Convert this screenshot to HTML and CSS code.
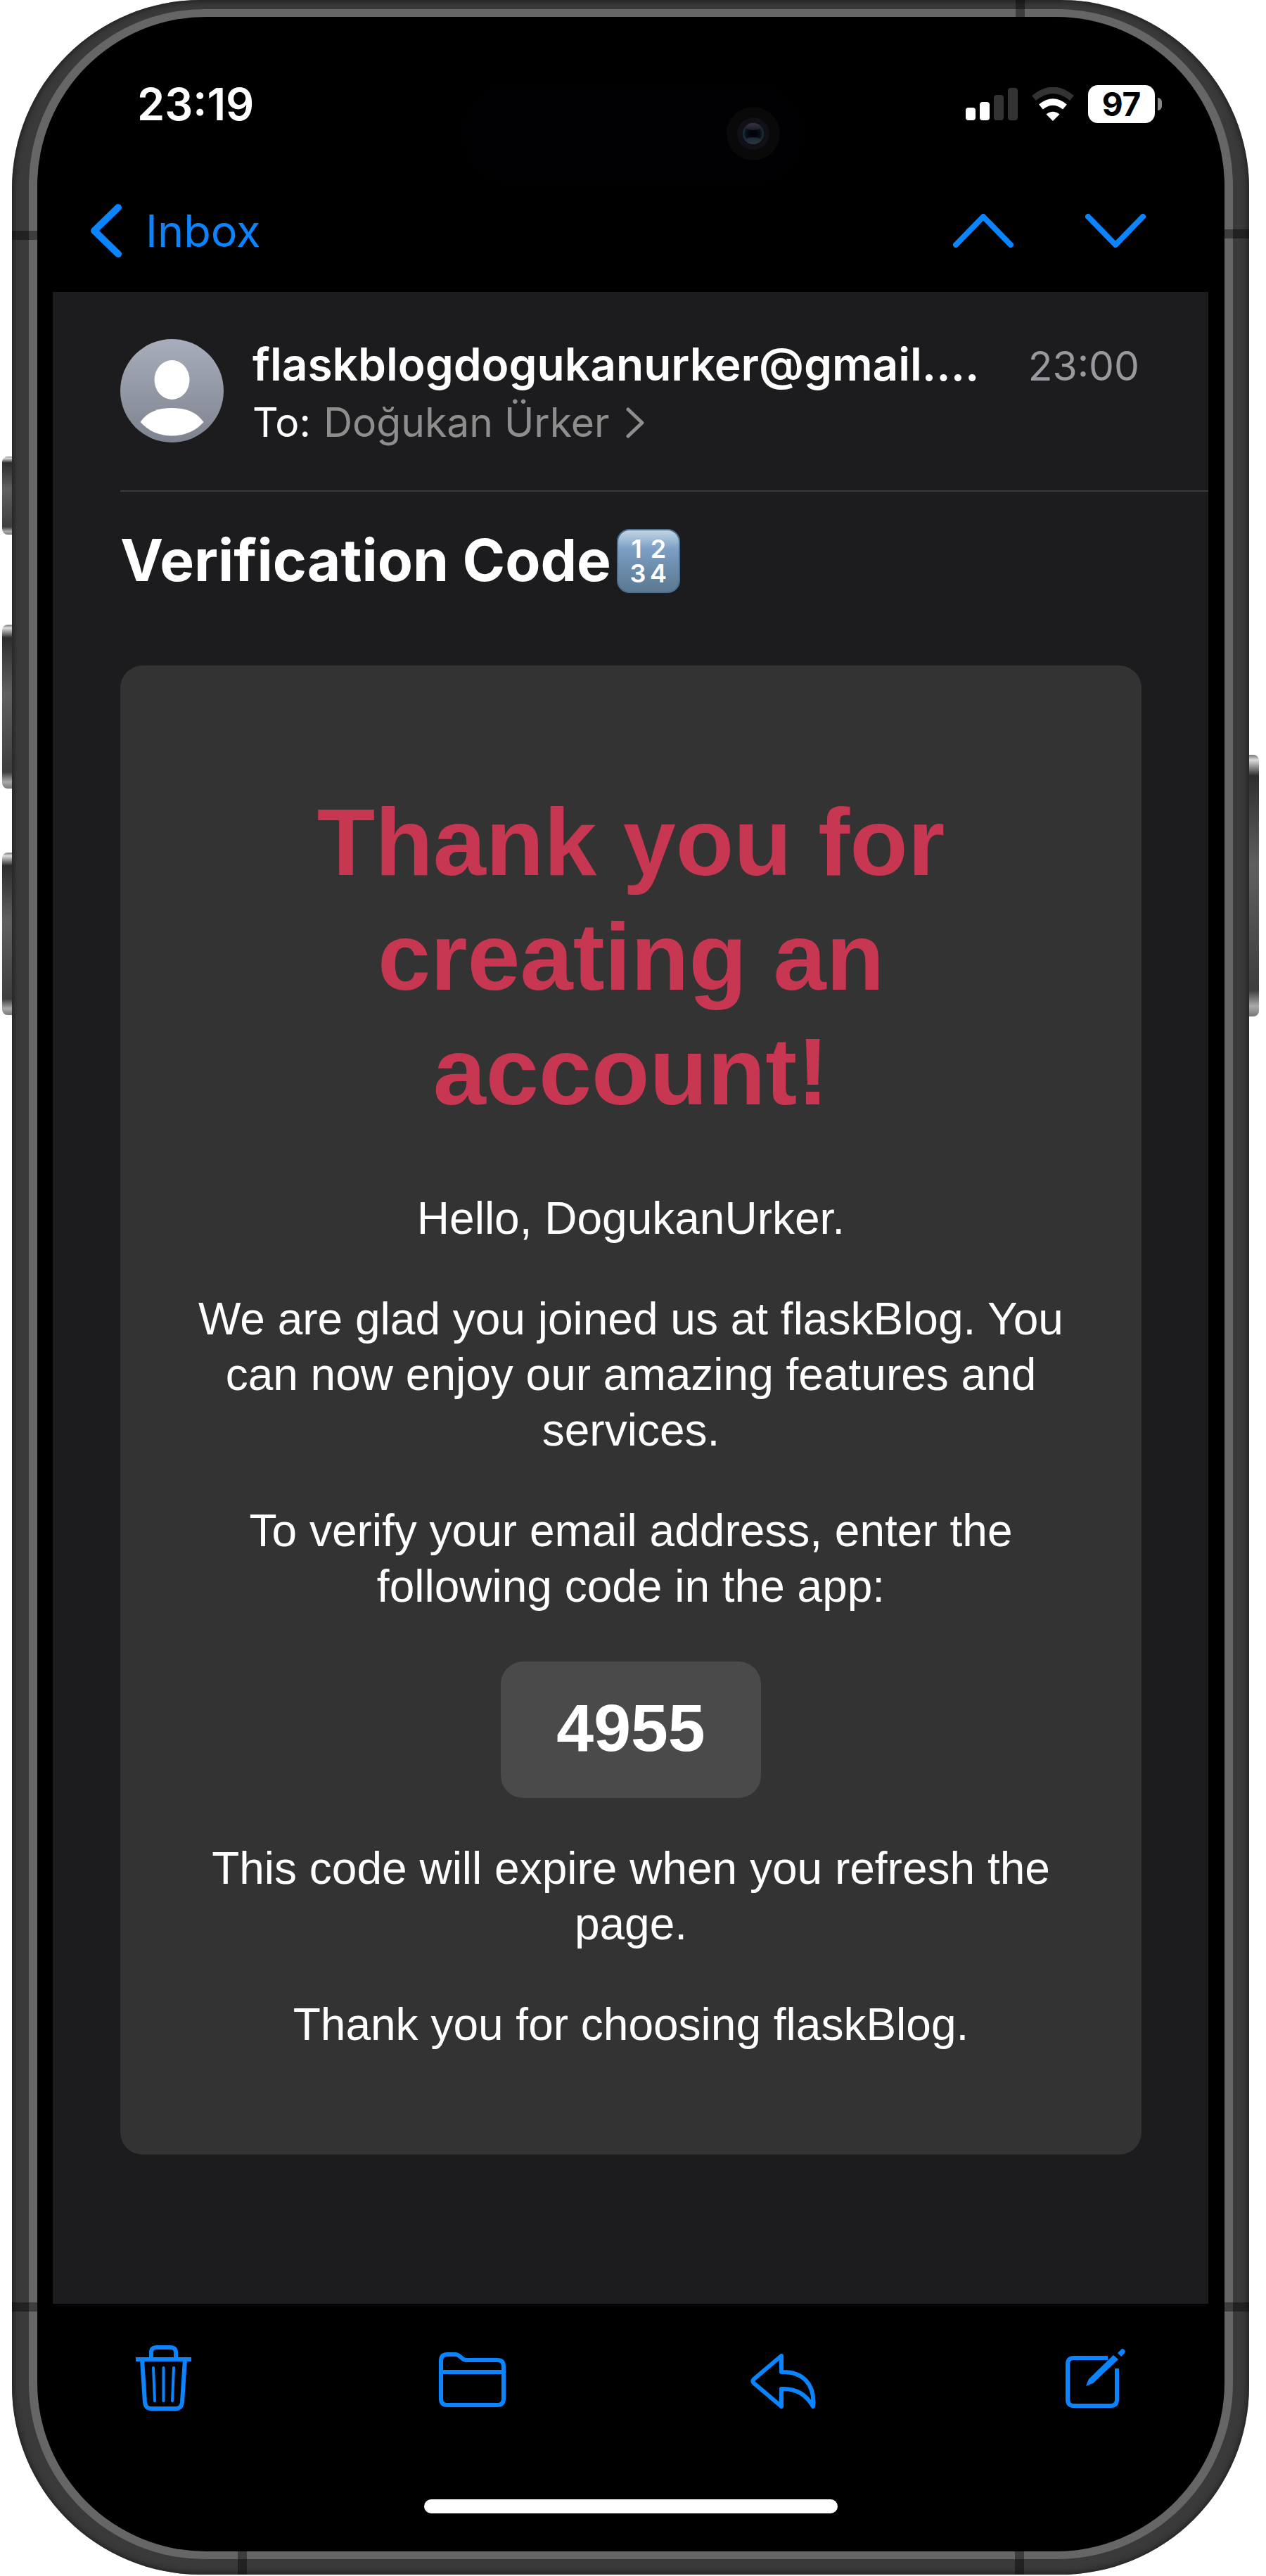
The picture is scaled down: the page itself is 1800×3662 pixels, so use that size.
FILE: index.html
```html
<!DOCTYPE html>
<html lang="en">
<head>
<meta charset="utf-8">
<title>Mail – Verification Code</title>
<meta name="viewport" content="width=device-width, initial-scale=1">
<link rel="stylesheet" href="styles.css">
</head>
<body>
<div class="device">
  <span class="key key-silent"></span>
  <span class="key key-up"></span>
  <span class="key key-down"></span>
  <span class="key key-power"></span>
  <div class="frame">
    <span class="band band-tl"></span>
    <span class="band band-tr"></span>
    <span class="band band-bl"></span>
    <span class="band band-br"></span>
    <span class="band band-top"></span>
    <span class="band band-bottom-left"></span>
    <span class="band band-bottom-right"></span>
    <div class="rim">
      <div class="screen">
        <div class="island">
          <svg class="lens" viewBox="0 0 76 76" aria-hidden="true">
            <defs>
              <radialGradient id="glass"><stop offset="0.3" stop-color="#01030c"/><stop offset="0.7" stop-color="#07121b"/><stop offset="1" stop-color="#1d3540"/></radialGradient>
              <linearGradient id="glint" x1="0" y1="0" x2="0" y2="1"><stop offset="0" stop-color="#494553"/><stop offset="1" stop-color="#1c1b28"/></linearGradient>
              <linearGradient id="glow" x1="0" y1="0" x2="0" y2="1"><stop offset="0" stop-color="#1b2733"/><stop offset="1" stop-color="#33434c"/></linearGradient>
              <clipPath id="lens-clip"><circle cx="38" cy="38" r="15"/></clipPath>
            </defs>
            <circle cx="38" cy="38" r="38" fill="#090909"/>
            <circle cx="38" cy="38" r="23" fill="#111016"/>
            <circle cx="38" cy="38" r="15" fill="url(#glass)"/>
            <g clip-path="url(#lens-clip)">
              <ellipse cx="38" cy="25" rx="14" ry="8" fill="url(#glint)"/>
              <ellipse cx="38" cy="51" rx="14" ry="8" fill="url(#glow)"/>
            </g>
          </svg>
        </div>

        <div class="status">
          <time class="clock">23:19</time>
          <div class="indicators">
            <svg class="signal" viewBox="0 0 74 46" aria-hidden="true">
              <rect x="0" y="28" width="14" height="18" rx="4" fill="#fff"/>
              <rect x="20" y="20" width="14" height="26" rx="4" fill="#fff"/>
              <rect x="40" y="10" width="14" height="36" rx="4" fill="#333"/>
              <rect x="60" y="0" width="14" height="46" rx="4" fill="#333"/>
            </svg>
            <svg class="wifi" viewBox="0 0 64 48" aria-hidden="true">
              <path d="M5 15.500Q32-7 59 15.500" fill="none" stroke="#333" stroke-width="9"/>
              <path d="M15 28Q32 14 49 28" fill="none" stroke="#fff" stroke-width="9"/>
              <path d="M32 48L22.500 38.500Q32 31 41.500 38.500Z" fill="#fff"/>
            </svg>
            <div class="battery"><span class="level">97</span><span class="nub"></span></div>
          </div>
        </div>

        <nav class="navbar">
          <a class="back" href="#inbox">
            <svg class="icon-back" viewBox="0 0 44 76" aria-hidden="true"><path d="M39 5L5 38l34 33"/></svg>
            <span>Inbox</span>
          </a>
          <div class="pager">
            <button class="icon-button" type="button" aria-label="Previous message">
              <svg class="icon-step" viewBox="0 0 86 48" aria-hidden="true"><path d="M4 44L43 4l39 40"/></svg>
            </button>
            <button class="icon-button" type="button" aria-label="Next message">
              <svg class="icon-step" viewBox="0 0 86 48" aria-hidden="true"><path d="M4 4l39 40L82 4"/></svg>
            </button>
          </div>
        </nav>

        <main class="message">
          <header class="sender">
            <svg class="avatar" viewBox="0 0 147 147" aria-hidden="true">
              <defs><linearGradient id="disc" x1="0" y1="0" x2="0" y2="1"><stop offset="0" stop-color="#a7adba"/><stop offset="1" stop-color="#7e838f"/></linearGradient></defs>
              <circle cx="73.500" cy="73.500" r="73.500" fill="url(#disc)"/>
              <ellipse cx="73.500" cy="58" rx="25" ry="28" fill="#fff"/>
              <path d="M28.500 118C39 103 54 98 73.500 98s34.500 5 45 20c-12 13-27 19.500-45 19.500S40.500 131 28.500 118Z" fill="#fff"/>
            </svg>
            <div class="envelope">
              <div class="from-row">
                <span class="from">flaskblogdogukanurker@gmail....</span>
                <time class="sent">23:00</time>
              </div>
              <div class="to-row">
                <span>To:</span>
                <a class="recipient" href="#recipient">Doğukan Ürker
                  <svg class="icon-more" viewBox="0 0 26 44" aria-hidden="true"><path d="M3 3l20 19L3 41"/></svg>
                </a>
              </div>
            </div>
          </header>

          <h1 class="subject"><span>Verification Code</span>
            <svg class="numbers" viewBox="0 0 90 91" role="img" aria-label="Numbers">
              <defs>
                <linearGradient id="tile" x1="0" y1="0" x2="0" y2="1"><stop offset="0" stop-color="#c3d5e4"/><stop offset="0.120" stop-color="#a9c2d8"/><stop offset="0.300" stop-color="#7ca0c5"/><stop offset="0.600" stop-color="#6c8dac"/><stop offset="1" stop-color="#5c7891"/></linearGradient>
              </defs>
              <rect x="1" y="1" width="88" height="89" rx="17" fill="url(#tile)" stroke="#4e6f91" stroke-width="2"/>
              <g class="numbers-text">
                <text x="28" y="41">1</text><text x="59" y="41">2</text>
                <text x="30" y="76">3</text><text x="59" y="76">4</text>
              </g>
            </svg>
          </h1>

          <article class="card">
            <h2 class="headline">Thank you for creating an account!</h2>
            <p>Hello, DogukanUrker.</p>
            <p>We are glad you joined us at flaskBlog. You can now enjoy our amazing features and services.</p>
            <p>To verify your email address, enter the following code in the app:</p>
            <strong class="code">4955</strong>
            <p>This code will expire when you refresh the page.</p>
            <p>Thank you for choosing flaskBlog.</p>
          </article>
        </main>

        <footer class="toolbar">
          <button class="icon-button" type="button" aria-label="Delete">
            <svg class="tool" viewBox="0 2 100 100" aria-hidden="true">
              <path d="M11 23H90M33 23V13Q33 6 41 6H60Q68 6 68 13V23" stroke-width="6"/>
              <path d="M20 23L24 84Q25 93 33 93H68Q76 93 77 84L81 23" stroke-width="6"/>
              <path d="M36 35L38 82M50.500 35V82M65 35L63 82" stroke-width="4" stroke-linecap="round"/>
            </svg>
          </button>
          <button class="icon-button" type="button" aria-label="Move to folder">
            <svg class="tool" viewBox="3 0 100 100" aria-hidden="true">
              <path d="M6 73V23Q6 14 15 14H26Q30 14 33 17L38 21Q40 22 43 22H86Q95 22 95 31V77Q95 86 86 86H15Q6 86 6 77Z" stroke-width="6"/>
              <path d="M6 39H95" stroke-width="6"/>
            </svg>
          </button>
          <button class="icon-button" type="button" aria-label="Reply">
            <svg class="tool" viewBox="3 0 100 100" aria-hidden="true">
              <path d="M48 16L9 49Q6 52 9 55L48 88V63C70 62 84 72 93 88C96 56 78 38 48 39Z" stroke-width="6" stroke-linejoin="round"/>
            </svg>
          </button>
          <button class="icon-button" type="button" aria-label="Compose">
            <svg class="tool" viewBox="0 0 100 100" aria-hidden="true">
              <path d="M67 19H19Q10 19 10 28V78Q10 87 19 87H71Q80 87 80 78V34" stroke-width="6"/>
              <path class="solid" d="M36 59L40 49L75 15L82 21L46 55ZM81 12L86 7Q88 5 90 7Q93 9 91 12L86 17Z"/>
            </svg>
          </button>
        </footer>
        <span class="home-indicator"></span>
      </div>
    </div>
  </div>
</div>
</body>
</html>
```
FILE: styles.css
```css
* { box-sizing: border-box; }

body {
  margin: 0;
  background: #fff;
  color: #fff;
  font-family: Inter, "Liberation Sans", sans-serif;
}

a { color: inherit; text-decoration: none; }
svg { display: block; flex: none; }

/* Phone body */
.device {
  position: relative;
  padding: 0 24px 1px 17px;
}

.frame {
  position: relative;
  padding: 13px 23px 22px 24px;
  border-radius: 268px;
  background: #3a3a3a;
  box-shadow: inset 0 0 10px 1px #1a1a1a;
}

.rim {
  padding: 11px 12px 11px 12px;
  border-radius: 250px;
  background: #666;
}

.screen {
  position: relative;
  display: flex;
  flex-direction: column;
  padding: 0 23px 0 22px;
  border-radius: 240px;
  background: #000;
}

.key {
  position: absolute;
  left: 3px;
  width: 14px;
  border-radius: 8px 0 0 8px;
  background: linear-gradient(#777, #ddd 2%, #2e2e2e 8%, #606060 42%, #3e3e3e 90%, #aaa 96%, #777);
}
.key-silent { top: 649px; height: 111px; }
.key-up { top: 888px; height: 233px; }
.key-down { top: 1212px; height: 231px; }
.key-power {
  top: 1073px;
  right: 10px;
  left: auto;
  height: 372px;
  border-radius: 0 8px 8px 0;
}

.band {
  position: absolute;
  width: 36px;
  height: 13px;
  background: rgba(0, 0, 0, 0.4);
}
.band-tl { top: 328px; left: 0; }
.band-tr { top: 326px; right: 0; }
.band-bl { bottom: 374px; left: 0; }
.band-br { bottom: 374px; right: 0; }
.band-top { top: 0; right: 319px; width: 13px; height: 24px; }
.band-bottom-left { bottom: 0; left: 321px; width: 13px; height: 33px; }
.band-bottom-right { bottom: 0; right: 320px; width: 13px; height: 33px; }

.island {
  position: absolute;
  top: 97px;
  left: 50%;
  width: 478px;
  height: 138px;
  margin-left: -236px;
  padding: 31px 30px;
  border-radius: 69px;
  background: #010103;
}
.lens { width: 76px; height: 76px; margin-left: auto; }

/* Status bar */
.status {
  position: relative;
  display: flex;
  align-items: center;
  justify-content: space-between;
  padding: 84px 66px 0 120px;
}
.clock { font-size: 63px; font-weight: 600; line-height: 80px; }
.indicators { display: flex; align-items: center; gap: 18px; }
.signal { width: 74px; height: 46px; }
.wifi { width: 64px; height: 48px; }
.battery { display: flex; align-items: center; gap: 4px; }
.level {
  width: 95px;
  border-radius: 14px;
  background: #fff;
  color: #000;
  font-size: 46px;
  font-weight: 700;
  line-height: 54px;
  text-align: center;
}
.nub { width: 6px; height: 18px; border-radius: 0 6px 6px 0; background: #888; }

/* Navigation bar */
.navbar {
  display: flex;
  align-items: center;
  justify-content: space-between;
  padding: 100px 89px 47px 54px;
  color: #0a84ff;
}
.back { display: flex; align-items: center; gap: 34px; font-size: 63px; line-height: 80px; }
.pager { display: flex; align-items: center; gap: 102px; }
.icon-button {
  margin: 0;
  padding: 0;
  border: 0;
  background: none;
  color: #0a84ff;
  cursor: pointer;
}
.icon-back, .icon-step, .icon-more, .tool {
  fill: none;
  stroke: currentColor;
}
.icon-back, .icon-step, .icon-more { stroke-linecap: round; stroke-linejoin: round; }
.icon-back { width: 44px; height: 76px; stroke-width: 10px; }
.icon-step { width: 86px; height: 48px; stroke-width: 8px; }
.icon-more { width: 26px; height: 44px; stroke-width: 5px; }

/* Message */
.message {
  padding: 67px 95px 212px 96px;
  background: #1c1c1e;
}
.sender {
  display: flex;
  gap: 41px;
  margin-right: -95px;
  padding: 0 98px 56px 0;
  border-bottom: 2px solid #3a3a3c;
}
.avatar { width: 147px; height: 147px; }
.envelope { flex: 1; min-width: 0; }
.from-row {
  display: flex;
  align-items: baseline;
  justify-content: space-between;
  gap: 48px;
  line-height: 72px;
}
.from { font-size: 64px; font-weight: 600; white-space: nowrap; }
.sent { color: #98989f; font-size: 57px; }
.to-row, .recipient { display: flex; align-items: center; }
.to-row { gap: 18px; margin-top: 4px; font-size: 57px; line-height: 80px; }
.recipient { gap: 24px; color: #8e8e8e; }

.subject {
  display: flex;
  align-items: center;
  gap: 8px;
  margin: 0;
  padding: 48px 0;
  font-size: 82px;
  font-weight: 700;
  line-height: 100px;
}
.numbers { width: 90px; height: 91px; }
.numbers-text { fill: #fff; font-size: 36px; font-weight: 600; text-anchor: middle; }

.card {
  display: flex;
  flex-direction: column;
  align-items: center;
  margin-top: 51px;
  padding: 170px 96px 145px;
  border-radius: 32px;
  background: #333;
  color: #fff;
  font-family: "Liberation Sans", Arial, sans-serif;
  font-size: 64px;
  line-height: 79px;
  text-align: center;
}
.card p { margin: 0 0 64px; }
.headline {
  max-width: 960px;
  margin: 0 0 88px;
  color: #c83751;
  font-size: 135px;
  line-height: 163px;
}
.code {
  margin: 3px 0 61px;
  padding: 45px 79px 51px;
  border-radius: 32px;
  background: #4a4a4a;
  font-size: 95px;
  line-height: 98px;
}
.card p:last-child { margin-bottom: 0; }

/* Toolbar */
.toolbar {
  display: flex;
  justify-content: space-between;
  padding: 58px 110px 120px 107px;
}
.tool { width: 100px; height: 100px; }
.solid { fill: currentColor; stroke: none; }
.home-indicator {
  align-self: center;
  width: 588px;
  height: 20px;
  margin-bottom: 54px;
  border-radius: 10px;
  background: #fff;
}
```
